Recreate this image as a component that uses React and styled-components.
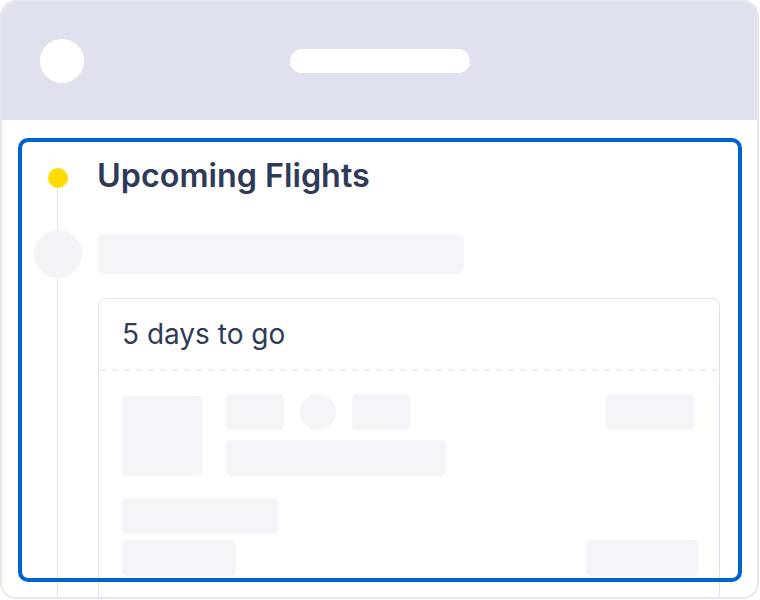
import React from "react";
import styled, { createGlobalStyle } from "styled-components";

const GlobalStyle = createGlobalStyle`
  html, body { margin: 0; padding: 0; background: #ffffff; }
  body { font-family: Inter, "Noto Sans", sans-serif; }
  * { box-sizing: border-box; }
`;

const Frame = styled.div`
  position: relative;
  width: 759px;
  height: 599px;
  border: 2px solid #e4e7ef;
  border-radius: 16px;
  overflow: hidden;
  background: #ffffff;
`;

const Header = styled.header`
  height: 118px;
  background: #dfe2ee;
  display: grid;
  grid-template-columns: 1fr auto 1fr;
  align-items: center;
  padding: 0 38px;
`;

const Avatar = styled.div`
  width: 44px;
  height: 44px;
  border-radius: 50%;
  background: #ffffff;
  justify-self: start;
`;

const Pill = styled.div`
  width: 180px;
  height: 24px;
  border-radius: 12px;
  background: #ffffff;
`;

const Body = styled.main`
  position: relative;
  padding: 38px 37px 0 32px;
  display: flex;
  flex-direction: column;

  &::before {
    content: "";
    position: absolute;
    left: 55px;
    top: 58px;
    bottom: 0;
    width: 1px;
    background: #e2e5ee;
  }
`;

const Row = styled.div`
  position: relative;
  display: grid;
  grid-template-columns: 48px 1fr;
  column-gap: 16px;
  align-items: center;
  margin-top: ${(p) => p.$gap || 0}px;
`;

const Marker = styled.div`
  justify-self: center;
  width: ${(p) => p.$size}px;
  height: ${(p) => p.$size}px;
  border-radius: 50%;
  background: ${(p) => p.$color};
`;

const Title = styled.h2`
  margin: 0 0 4px -1px;
  font-size: 32.3px;
  line-height: 36px;
  font-weight: 600;
  color: #2e3a59;
`;

const Skel = styled.div`
  width: ${(p) => p.$w}px;
  height: ${(p) => p.$h || 36}px;
  border-radius: ${(p) => (p.$round ? "50%" : `${p.$r || 5}px`)};
  background: #f4f5f9;
  flex: none;
`;

const Card = styled.section`
  grid-column: 2;
  border: 1px solid #dde1ee;
  border-radius: 8px;
  background: #ffffff;
`;

const CardHeader = styled.div`
  height: 70px;
  display: flex;
  align-items: center;
  padding: 0 24px 0 23px;
  font-size: 28px;
  font-weight: 400;
  color: #2e3a59;
`;

const Dashed = styled.div`
  height: 2px;
  margin-left: 1px;
  background: repeating-linear-gradient(
    to right,
    #eceef4 0 6px,
    transparent 6px 12px
  );
`;

const CardBody = styled.div`
  padding: 23px 21px 60px 23px;
  display: flex;
  flex-direction: column;
  gap: 22px;
`;

const TopSection = styled.div`
  display: grid;
  grid-template-columns: 80px 1fr auto;
  column-gap: 24px;
  align-items: start;
`;

const Thumb = styled(Skel)`
  align-self: end;
`;

const Middle = styled.div`
  display: flex;
  flex-direction: column;
  gap: 10px;
`;

const InlineRow = styled.div`
  display: flex;
  align-items: center;
  gap: 16px;
`;

const RightSkel = styled(Skel)`
  margin-right: 4px;
`;

const BottomSection = styled.div`
  display: flex;
  justify-content: space-between;
  align-items: flex-end;
`;

const Stack = styled.div`
  display: flex;
  flex-direction: column;
  gap: 6px;
`;

const Highlight = styled.div`
  position: absolute;
  left: 16px;
  top: 136px;
  width: 724px;
  height: 444px;
  border: 4px solid #0063d3;
  border-radius: 10px;
  pointer-events: none;
`;

export default function App() {
  return (
    <>
      <GlobalStyle />
      <Frame>
        <Header>
          <Avatar />
          <Pill />
        </Header>
        <Body>
          <Row>
            <Marker $size={20} $color="#ffdd00" />
            <Title>Upcoming Flights</Title>
          </Row>
          <Row $gap={32}>
            <Marker $size={48} $color="#f3f4f8" />
            <Skel $w={366} $h={40} $r={6} />
          </Row>
          <Row $gap={20}>
            <Card>
              <CardHeader>5 days to go</CardHeader>
              <Dashed />
              <CardBody>
                <TopSection>
                  <Thumb $w={80} $h={80} />
                  <Middle>
                    <InlineRow>
                      <Skel $w={58} />
                      <Skel $w={36} $round />
                      <Skel $w={58} />
                    </InlineRow>
                    <Skel $w={220} />
                  </Middle>
                  <RightSkel $w={88} />
                </TopSection>
                <BottomSection>
                  <Stack>
                    <Skel $w={156} />
                    <Skel $w={114} />
                  </Stack>
                  <Skel $w={112} />
                </BottomSection>
              </CardBody>
            </Card>
          </Row>
        </Body>
        <Highlight />
      </Frame>
    </>
  );
}
